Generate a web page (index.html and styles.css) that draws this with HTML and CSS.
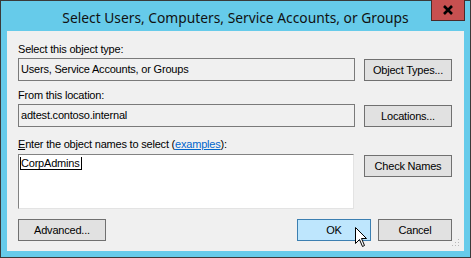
FILE: index.html
```html
<!DOCTYPE html>
<html lang="en">
<head>
    <meta charset="UTF-8">
    <title>Select Users, Computers, Service Accounts, or Groups</title>
    <link rel="stylesheet" href="styles.css">
</head>
<body>
    <div class="window">
        <div class="titlebar">
            <span class="title">Select Users, Computers, Service Accounts, or Groups</span>
            <div class="close">
                <svg width="12" height="10" viewBox="0 0 12 10">
                    <path d="M2 1 L10 9 M10 1 L2 9" stroke="#000" stroke-width="2.6" fill="none"/>
                </svg>
            </div>
        </div>

        <div class="client">
            <div class="label label-first">Select this object type:</div>
            <div class="row">
                <div class="field">Users, Service Accounts, or Groups</div>
                <button class="btn">Object Types...</button>
            </div>

            <div class="label">From this location:</div>
            <div class="row">
                <div class="field">adtest.contoso.internal</div>
                <button class="btn">Locations...</button>
            </div>

            <div class="label label-names"><u>E</u>nter the object names to select (<a href="#" class="link">examples</a>):</div>
            <div class="row">
                <div class="names"><span class="entered">CorpAdmins</span></div>
                <button class="btn btn-check">Check Names</button>
            </div>

            <div class="footer">
                <button class="btn">Advanced...</button>
                <div class="footer-right">
                    <button class="btn btn-default">OK</button>
                    <button class="btn">Cancel</button>
                </div>
            </div>

            <svg class="grip" width="8" height="8" viewBox="0 0 8 8">
                <rect x="6" y="0" width="1" height="1" fill="#b8b8b8"/>
                <rect x="3" y="3" width="1" height="1" fill="#b8b8b8"/>
                <rect x="6" y="3" width="1" height="1" fill="#b8b8b8"/>
                <rect x="0" y="6" width="1" height="1" fill="#b8b8b8"/>
                <rect x="3" y="6" width="1" height="1" fill="#b8b8b8"/>
                <rect x="6" y="6" width="1" height="1" fill="#b8b8b8"/>
            </svg>

            <svg class="cursor" width="13" height="21" viewBox="0 0 13 21">
                <path d="M0.5 0.5 L0.5 16.5 L4.5 12.5 L7.5 19.5 L9.5 18.5 L6.5 11.5 L11.5 11.5 Z" fill="#fff" stroke="#000" stroke-width="1"/>
            </svg>
        </div>
    </div>
</body>
</html>
```

FILE: styles.css
```css
body {
    margin: 0;
    font-family: 'Liberation Sans', Arial, sans-serif;
}
.window {
    position: relative;
    width: 471px;
    height: 258px;
    box-sizing: border-box;
    border: 1px solid #3a3a3a;
    background: #66cbea;
    padding: 0 6px 6px 6px;
    display: flex;
    flex-direction: column;
}
.titlebar {
    position: relative;
    height: 30px;
    display: flex;
    align-items: center;
    justify-content: center;
}
.title {
    font-family: 'Noto Sans', sans-serif;
    font-size: 13.8px;
    color: #111;
    margin-top: 2px;
}
.close {
    position: absolute;
    top: -1px;
    right: -1px;
    width: 34px;
    height: 21px;
    box-sizing: border-box;
    background: #c75050;
    border: 1px solid #4a2a2a;
    border-top: none;
    display: flex;
    align-items: center;
    justify-content: center;
}
.client {
    position: relative;
    flex: 1;
    background: #f0f0f0;
    padding: 0 12px 0 11px;
    font-size: 11px;
    color: #000;
}
.label {
    line-height: 14px;
    margin-top: 7px;
    margin-bottom: 2px;
    letter-spacing: -0.2px;
}
.label-first {
    margin-top: 11px;
}
.label-names {
    margin-top: 10px;
    margin-bottom: 3px;
}
.link {
    color: #0066cc;
}
.row {
    display: flex;
    justify-content: space-between;
    align-items: flex-start;
}
.field {
    width: 337px;
    height: 23px;
    box-sizing: border-box;
    border: 1px solid #7a7a7a;
    background: #f0f0f0;
    padding: 0 2px;
    line-height: 21px;
    letter-spacing: -0.2px;
}
.names {
    width: 336px;
    height: 55px;
    box-sizing: border-box;
    border: 1px solid;
    border-color: #828282 #e3e3e3 #e3e3e3 #828282;
    background: #fff;
    padding: 1px 1px;
    line-height: 14px;
}
.entered {
    border: 1px solid #000;
    border-top: none;
    padding-right: 1px;
    letter-spacing: -0.2px;
}
.btn {
    width: 88px;
    height: 22px;
    margin-top: 1px;
    box-sizing: border-box;
    background: #e1e1e1;
    border: 1px solid #707070;
    font-family: 'Liberation Sans', Arial, sans-serif;
    font-size: 11px;
    color: #000;
    padding: 0;
    letter-spacing: -0.2px;
}
.footer {
    display: flex;
    justify-content: space-between;
    margin-top: 10px;
}
.footer .btn {
    margin-top: 0;
    width: 88px;
}
.footer-right {
    display: flex;
    gap: 7px;
}
.footer-right .btn {
    width: 74px;
}
.btn-default {
    background: #bee6fd;
    border-color: #3c7fb1;
}
.grip {
    position: absolute;
    right: 4px;
    bottom: 4px;
}
.cursor {
    position: absolute;
    left: 348px;
    top: 196px;
}
```
